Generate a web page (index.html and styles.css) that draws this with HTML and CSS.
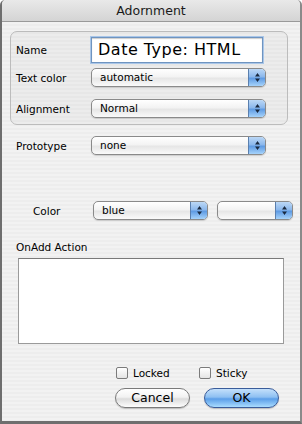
FILE: index.html
```html
<!DOCTYPE html>
<html>
<head>
<meta charset="utf-8">
<link rel="stylesheet" href="styles.css">
</head>
<body>
<div class="window">
  <div class="titlebar">Adornment</div>
  <div class="content">
    <div class="group">
      <div class="row row-name">
        <span class="label">Name</span>
        <div class="textfield">Date Type: HTML</div>
      </div>
      <div class="row row-text">
        <span class="label">Text color</span>
        <div class="popup wide"><span class="val">automatic</span><span class="arrows"><svg width="7" height="11" viewBox="0 0 7 11"><path d="M3.5 1 L6 4.5 H1 Z M3.5 10 L6 6.5 H1 Z" fill="#1a2a40"/></svg></span></div>
      </div>
      <div class="row row-align">
        <span class="label">Alignment</span>
        <div class="popup wide"><span class="val">Normal</span><span class="arrows"><svg width="7" height="11" viewBox="0 0 7 11"><path d="M3.5 1 L6 4.5 H1 Z M3.5 10 L6 6.5 H1 Z" fill="#1a2a40"/></svg></span></div>
      </div>
    </div>
    <div class="row row-proto">
      <span class="label">Prototype</span>
      <div class="popup wide"><span class="val">none</span><span class="arrows"><svg width="7" height="11" viewBox="0 0 7 11"><path d="M3.5 1 L6 4.5 H1 Z M3.5 10 L6 6.5 H1 Z" fill="#1a2a40"/></svg></span></div>
    </div>
    <div class="row row-color">
      <span class="label color-label">Color</span>
      <div class="popup mid"><span class="val">blue</span><span class="arrows"><svg width="7" height="11" viewBox="0 0 7 11"><path d="M3.5 1 L6 4.5 H1 Z M3.5 10 L6 6.5 H1 Z" fill="#1a2a40"/></svg></span></div>
      <div class="popup small"><span class="val"></span><span class="arrows"><svg width="7" height="11" viewBox="0 0 7 11"><path d="M3.5 1 L6 4.5 H1 Z M3.5 10 L6 6.5 H1 Z" fill="#1a2a40"/></svg></span></div>
    </div>
    <div class="action-label">OnAdd Action</div>
    <div class="textarea"></div>
    <div class="checks">
      <label class="check"><span class="box"></span>Locked</label>
      <label class="check"><span class="box"></span>Sticky</label>
    </div>
    <div class="buttons">
      <div class="btn">Cancel</div>
      <div class="btn default">OK</div>
    </div>
  </div>
</div>
</body>
</html>
```
FILE: styles.css
```css
html, body {
  margin: 0;
  padding: 0;
  background: #ffffff;
}
body {
  font-family: "DejaVu Sans", "Liberation Sans", sans-serif;
  font-size: 10.5px;
  color: #000;
}
.window {
  width: 302px;
  height: 424px;
  box-sizing: border-box;
  border-left: 2px solid #6e6e6e;
  border-right: 2px solid #8a8a8a;
  border-bottom: 3px solid #6e6e6e;
  border-radius: 5px 5px 0 0;
  overflow: hidden;
  background: repeating-linear-gradient(to bottom, #ededed 0, #ededed 2px, #f2f2f2 2px, #f2f2f2 4px);
  display: flex;
  flex-direction: column;
}
.titlebar {
  height: 21px;
  border-bottom: 1px solid #9a9a9a;
  background: linear-gradient(to bottom, #e9e9e9, #d4d4d4);
  text-align: center;
  font-size: 12.5px;
  line-height: 22px;
  color: #1a1a1a;
}
.content {
  display: flex;
  flex-direction: column;
  padding: 0 0 0 8px;
}
.group {
  margin-top: 9px;
  width: 278px;
  box-sizing: border-box;
  border: 1px solid #bcbcbc;
  border-radius: 7px;
  background: rgba(0, 0, 0, 0.025);
  padding: 5px 0 6px 5px;
  display: flex;
  flex-direction: column;
}
.row {
  display: flex;
  align-items: center;
}
.label {
  width: 75px;
  flex: none;
}
.row-text { margin-top: 5px; }
.row-align { margin-top: 12px; }
.textfield {
  width: 172px;
  height: 26px;
  box-sizing: border-box;
  border: 1px solid #6f94c0;
  box-shadow: 0 0 0 1px #a9c6e8, inset 0 1px 1px rgba(0,0,0,0.2);
  background: #fff;
  font-size: 16px;
  line-height: 24px;
  padding-left: 6px;
  letter-spacing: 0.5px;
}
.popup {
  height: 19px;
  box-sizing: border-box;
  border: 1px solid #8a8a8a;
  border-radius: 5px;
  background: linear-gradient(to bottom, #ffffff 0%, #f3f3f3 45%, #e6e6e6 55%, #fafafa 100%);
  display: flex;
  align-items: center;
  overflow: hidden;
  box-shadow: 0 1px 1px rgba(0,0,0,0.15);
}
.popup .val {
  flex: 1;
  padding-left: 8px;
  line-height: 17px;
}
.popup .arrows {
  width: 16px;
  height: 100%;
  border-left: 1px solid #5a7fae;
  background: linear-gradient(to bottom, #bcd8f6 0%, #8cb8ec 45%, #5f9be3 55%, #a6d3fb 100%);
  display: flex;
  align-items: center;
  justify-content: center;
}
.wide { width: 175px; }
.row-proto { margin-top: 11px; padding-left: 6px; }
.row-color { margin-top: 46px; }
.color-label { width: 83px; padding-left: 23px; box-sizing: border-box; }
.mid { width: 115px; }
.small { width: 76px; margin-left: 9px; }
.action-label {
  margin-top: 21px;
  padding-left: 6px;
}
.textarea {
  margin-top: 5px;
  margin-left: 8px;
  width: 266px;
  height: 86px;
  box-sizing: border-box;
  border: 1px solid #9a9a9a;
  border-top-color: #7a7a7a;
  background: #fff;
}
.checks {
  margin-top: 23px;
  margin-left: 106px;
  display: flex;
  gap: 0;
}
.check {
  display: flex;
  align-items: center;
  width: 83px;
}
.box {
  width: 12px;
  height: 12px;
  box-sizing: border-box;
  border: 1px solid #7b7b7b;
  border-radius: 2px;
  background: linear-gradient(to bottom, #ffffff, #e4e4e4);
  margin-right: 5px;
}
.buttons {
  margin-top: 9px;
  margin-left: 105px;
  display: flex;
  gap: 14px;
}
.btn {
  width: 75px;
  height: 20px;
  box-sizing: border-box;
  border: 1px solid #7a7a7a;
  border-radius: 10px;
  background: linear-gradient(to bottom, #ffffff 0%, #f2f2f2 45%, #dcdcdc 55%, #fdfdfd 100%);
  text-align: center;
  font-size: 12.5px;
  line-height: 18px;
  box-shadow: 0 1px 1px rgba(0,0,0,0.2);
}
.btn.default {
  border-color: #3a5c9a;
  background: linear-gradient(to bottom, #c4e0fb 0%, #8ec0f2 45%, #5b9ee8 55%, #a9dcff 100%);
}
```
